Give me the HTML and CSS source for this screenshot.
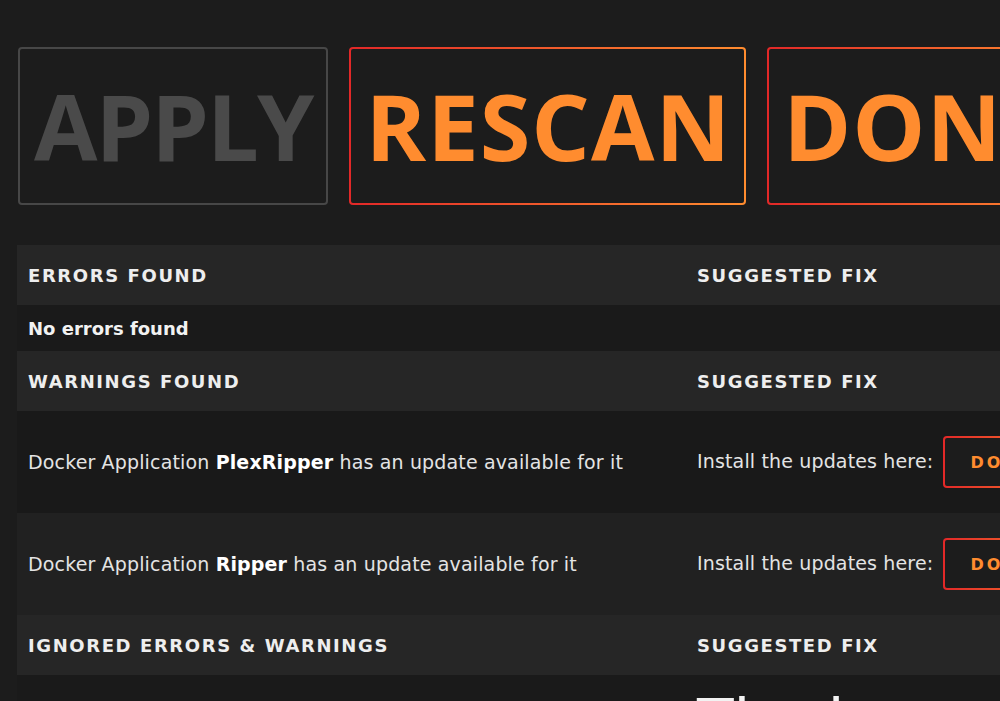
FILE: index.html
```html
<!DOCTYPE html>
<html lang="en">
<head>
  <meta charset="UTF-8">
  <title>Fix Common Problems</title>
  <link rel="stylesheet" href="styles.css">
</head>
<body>

<div class="actions">
  <button class="big-btn disabled">APPLY</button>
  <button class="big-btn">RESCAN</button>
  <button class="big-btn">DONE</button>
</div>

<table class="problems">
  <tr class="head">
    <th class="col-issue">Errors Found</th>
    <th>Suggested Fix</th>
  </tr>
  <tr class="empty">
    <td colspan="2">No errors found</td>
  </tr>
  <tr class="head">
    <th class="col-issue">Warnings Found</th>
    <th>Suggested Fix</th>
  </tr>
  <tr class="item odd">
    <td>Docker Application <b>PlexRipper</b> has an update available for it</td>
    <td>Install the updates here: <button class="small-btn">Docker</button></td>
  </tr>
  <tr class="item even">
    <td>Docker Application <b>Ripper</b> has an update available for it</td>
    <td>Install the updates here: <button class="small-btn">Docker</button></td>
  </tr>
  <tr class="head">
    <th class="col-issue">Ignored Errors &amp; Warnings</th>
    <th>Suggested Fix</th>
  </tr>
  <tr class="ignored">
    <td></td>
    <td class="big-note">The ignored list is empty</td>
  </tr>
</table>

</body>
</html>
```

FILE: styles.css
```css
html, body {
  margin: 0;
  background: #1c1c1c;
  overflow: hidden;
}
body {
  font-family: "DejaVu Sans", "Open Sans", sans-serif;
  color: #e8e8e8;
  padding: 47px 0 0 17px;
  width: 1400px;
}
.actions {
  display: flex;
  gap: 21px;
  margin-left: 1px;
}
.big-btn {
  font-family: "Open Sans", sans-serif;
  font-size: 92px;
  font-weight: bold;
  letter-spacing: 1px;
  line-height: 1;
  height: 158px;
  padding: 0 13px 0 14px;
  color: #ff8c2f;
  border: 2px solid transparent;
  border-radius: 4px;
  background: linear-gradient(#1c1c1c, #1c1c1c) padding-box,
              linear-gradient(90deg, #e22828, #ff8c2f) border-box;
}
.big-btn.disabled {
  letter-spacing: -2px;
  padding: 0 14px;
  color: #4a4a4a;
  background: #1c1c1c;
  border-color: #474747;
}
.problems {
  margin-top: 40px;
  border-collapse: collapse;
  width: 1380px;
}
.problems th, .problems td {
  text-align: left;
  padding: 0 11px;
}
.col-issue {
  width: 647px;
}
.head {
  background: #262626;
  height: 60px;
}
.head th {
  font-size: 18px;
  font-weight: bold;
  letter-spacing: 1.6px;
  text-transform: uppercase;
  color: #eeeeee;
}
.empty {
  background: #1a1a1a;
  height: 46px;
}
.empty td {
  font-size: 18px;
  font-weight: bold;
  color: #f2f2f2;
}
.item {
  height: 102px;
}
.item td {
  font-size: 19px;
  letter-spacing: 0.15px;
  color: #e4e4e4;
}
.item b {
  color: #ffffff;
}
.odd {
  background: #191919;
}
.even {
  background: #212121;
}
.small-btn {
  font-family: inherit;
  font-size: 16px;
  font-weight: bold;
  letter-spacing: 3px;
  text-transform: uppercase;
  color: #ff8c2f;
  height: 52px;
  padding: 0 26px;
  margin-left: 3px;
  border: 2px solid transparent;
  border-radius: 4px;
  background: linear-gradient(#1c1c1c, #1c1c1c) padding-box,
              linear-gradient(90deg, #e22828, #ff8c2f) border-box;
  vertical-align: middle;
}
.ignored {
  background: #1a1a1a;
  height: 80px;
}
.problems .big-note {
  font-size: 60px;
  padding-top: 11px;
  vertical-align: top;
  color: #f2f2f2;
}
```
